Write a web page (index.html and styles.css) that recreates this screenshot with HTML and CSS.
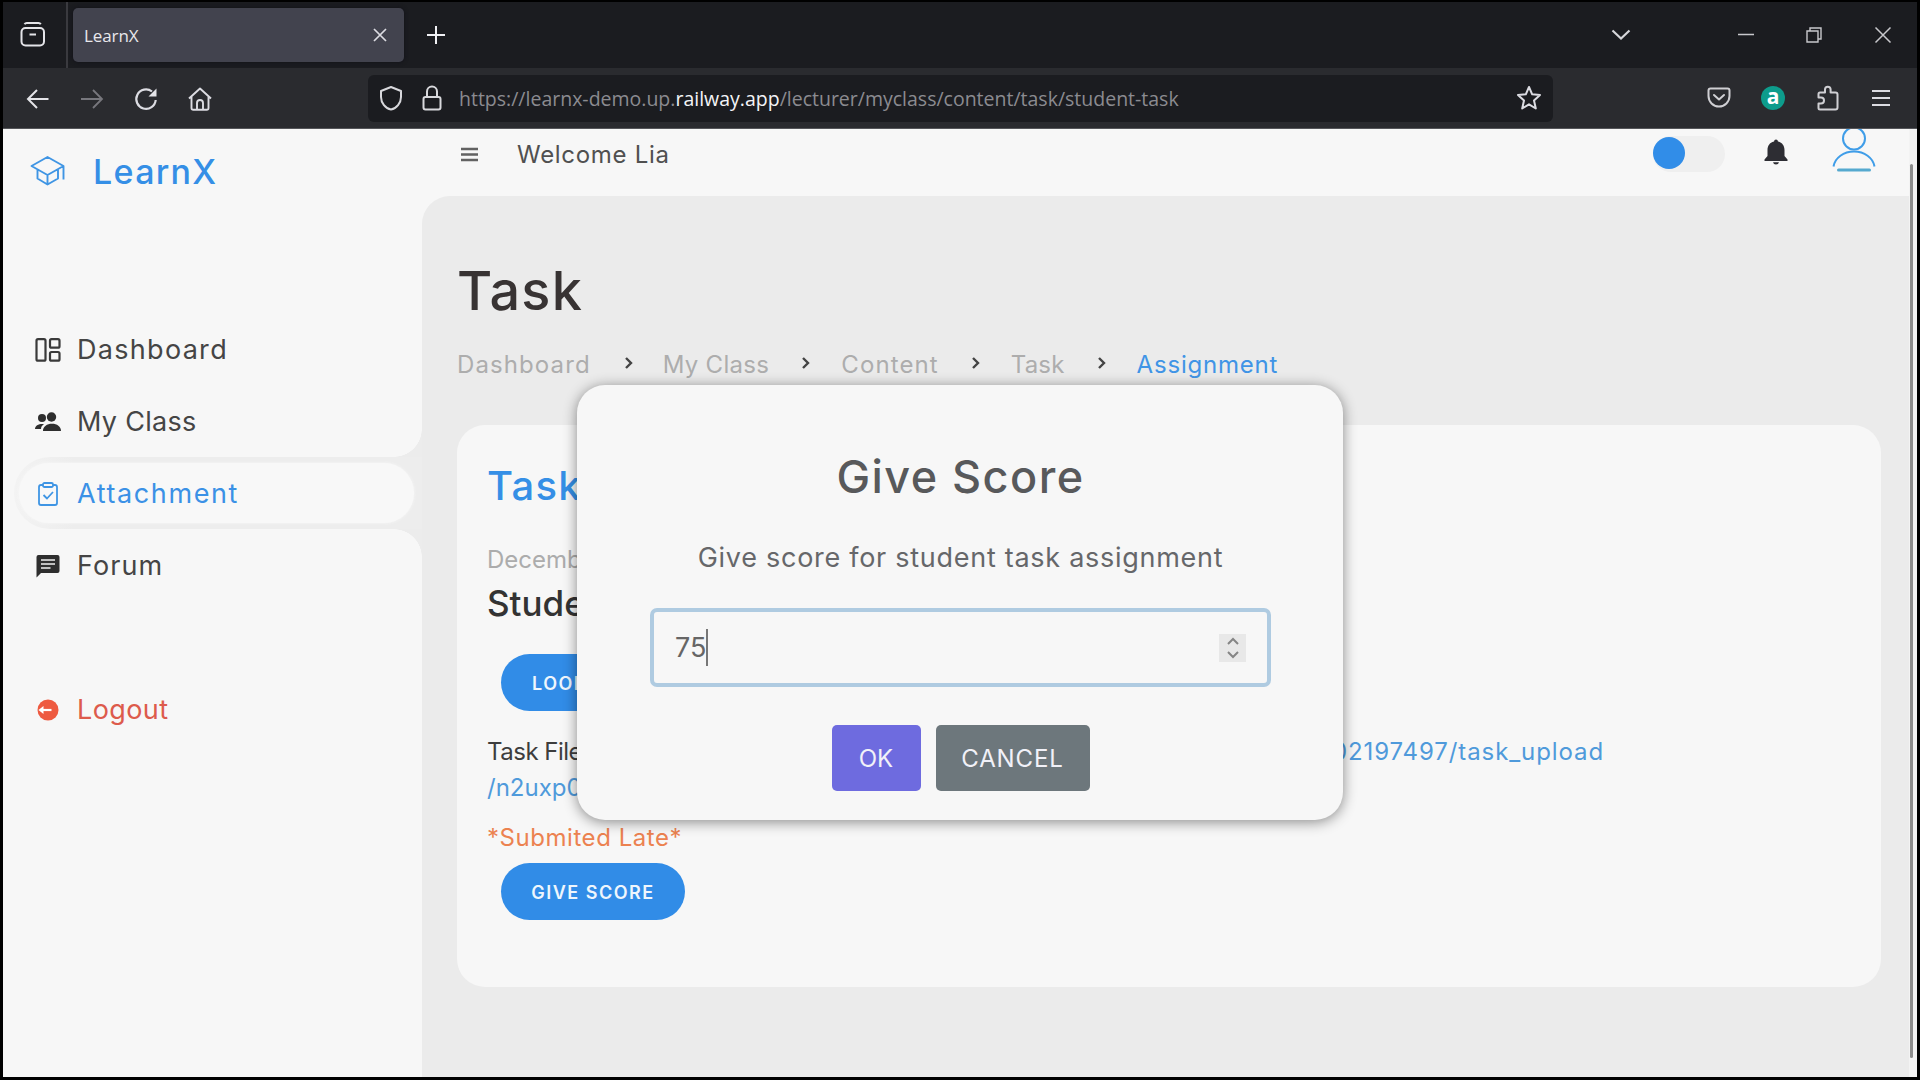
FILE: index.html
```
<!DOCTYPE html>
<html lang="en">
<head>
<meta charset="utf-8">
<title>LearnX</title>
<link rel="stylesheet" href="styles.css">
</head>
<body>
<div class="window">
  <div class="tabbar">
    <div class="view-btn">
      <svg width="26" height="26" viewBox="0 0 26 26" fill="none" stroke="#e4e4e8" stroke-width="2"><path d="M4.5 2.2C5 1.4 5.8 1 6.800 1H18.500C19.500 1 20.300 1.400 20.800 2.200"/><rect x="1.500" y="6" width="22.500" height="17.500" rx="4"/><path d="M9.500 12.500H16"/></svg>
    </div>
    <div class="tab">
      <span>LearnX</span>
      <svg width="14" height="14" viewBox="0 0 14 14" stroke="#dcdce2" stroke-width="1.700"><path d="M1 1L13 13M13 1L1 13"/></svg>
    </div>
    <svg class="newtab" width="18" height="18" viewBox="0 0 18 18" stroke="#f0f0f4" stroke-width="2"><path d="M9 0V18M0 9H18"/></svg>
    <div class="win-controls">
      <svg width="20" height="12" viewBox="0 0 20 12" fill="none" stroke="#d6d6da" stroke-width="2.200"><path d="M1.500 1.500L10 9.500L18.500 1.500"/></svg>
      <svg width="16" height="16" viewBox="0 0 16 16" stroke="#c8c8cc" stroke-width="1.500"><path d="M0 7.500H16"/></svg>
      <svg width="16" height="16" viewBox="0 0 16 16" fill="none" stroke="#c8c8cc" stroke-width="1.400"><path d="M1 4H12V15H1ZM4 3.500V1H15V12H12.500"/></svg>
      <svg width="18" height="18" viewBox="0 0 18 18" stroke="#c8c8cc" stroke-width="1.500"><path d="M1.500 1.500L16.500 16.500M16.500 1.500L1.500 16.500"/></svg>
    </div>
  </div>

  <div class="toolbar">
    <div class="nav">
      <svg width="24" height="24" viewBox="0 0 24 24" fill="none" stroke="#e4e4e8" stroke-width="2"><path d="M22.500 12H2M11 3L2 12L11 21"/></svg>
      <svg width="24" height="24" viewBox="0 0 24 24" fill="none" stroke="#77777d" stroke-width="1.800"><path d="M1 12H22M13 3L22 12L13 21"/></svg>
      <svg width="24" height="24" viewBox="0 0 24 24" fill="none" stroke="#dcdce2" stroke-width="2.200"><path d="M18 4.500A9.700 9.700 0 1 0 21.700 13"/><path d="M22.500 1.500V9.500H14.500Z" fill="#e4e4e8" stroke="none"/></svg>
      <svg width="24" height="24" viewBox="0 0 24 24" fill="none" stroke="#dcdce2" stroke-width="1.900" stroke-linejoin="round"><path d="M1 11.500L12 1.500L23 11.500M3.500 9.500V21Q3.500 22.800 5.300 22.800H18.700Q20.500 22.800 20.500 21V9.500"/><path d="M9 22.500V16Q9 13 12 13T15 16V22.500"/></svg>
    </div>
    <div class="urlbar">
      <svg width="24" height="26" viewBox="0 0 24 26" fill="none" stroke="#d8d8dc" stroke-width="2" stroke-linejoin="round"><path d="M12 2L22 6V12C22 18 17.500 23.500 12 24.500C6.500 23.500 2 18 2 12V6Z"/></svg>
      <svg width="20" height="26" viewBox="0 0 20 26" fill="none" stroke="#d8d8dc" stroke-width="2"><rect x="1.500" y="12" width="17" height="12.500" rx="2"/><path d="M5 12V6.500A5 5 0 0 1 15 6.500V12"/></svg>
      <div class="url">https://learnx-demo.up.<b>railway.app</b>/lecturer/myclass/content/task/student-task</div>
      <svg width="26" height="26" viewBox="0 0 26 26" fill="none" stroke="#dcdce2" stroke-width="2" stroke-linejoin="round"><path d="M13 2L16.200 9.300L24 10L18 15.500L19.800 23.500L13 19.300L6.200 23.500L8 15.500L2 10L9.800 9.300Z"/></svg>
    </div>
    <div class="ext">
      <svg width="24" height="22" viewBox="0 0 24 22" fill="none" stroke="#cfcfd3" stroke-width="2" stroke-linecap="round" stroke-linejoin="round"><path d="M3.500 1.500H20.500Q22.500 1.500 22.500 3.500V9A10.500 10.500 0 0 1 1.500 9V3.500Q1.500 1.500 3.500 1.500Z"/><path d="M7 8L12 12.500L17 8"/></svg>
      <span class="ext-a">a</span>
      <svg width="24" height="26" viewBox="0 0 24 26" fill="none" stroke="#cfcfd3" stroke-width="2" stroke-linejoin="round"><path d="M4 24.500Q2.500 24.500 2.500 23V18.500H5A3 3 0 0 0 5 12.500H2.500V9Q2.500 7.500 4 7.500H9V4.500A2.800 2.800 0 0 1 14.600 4.500V7.500H19.500Q21.500 7.500 21.500 9.500V22.500Q21.500 24.500 19.500 24.500Z"/></svg>
      <svg width="18" height="16" viewBox="0 0 18 16" stroke="#dcdce2" stroke-width="1.900"><path d="M0 1H18M0 8H18M0 15H18"/></svg>
    </div>
  </div>

  <div class="page">
    <aside class="sidebar">
      <div class="brand">
        <svg width="36" height="32" viewBox="0 0 36 32" fill="none" stroke="#3f95e4" stroke-width="1.900" stroke-linejoin="round"><path d="M1.500 11L17.500 2L33.500 11L17.500 20ZM7.500 14.500V23.500L17.500 29.500L28 23.500V14.500M17.500 20V29.500M33.500 11V24.500"/></svg>
        <span>LearnX</span>
      </div>
      <ul class="menu">
        <li><svg width="26" height="24" viewBox="0 0 26 24" fill="none" stroke="#3a3a3a" stroke-width="2.200"><rect x="1.500" y="1.200" width="9" height="21.500" rx="1.500"/><rect x="15" y="1.200" width="9.500" height="8.500" rx="1.500"/><rect x="15" y="14" width="9.500" height="8.700" rx="1.500"/></svg><span class="w-dashboard">Dashboard</span></li>
        <li><svg width="26" height="20" viewBox="0 0 26 20" fill="#2e2e2e"><circle cx="7" cy="6" r="4"/><circle cx="16.500" cy="5" r="4.700"/><path d="M0 17C0 13.500 4 11.500 9 12C7 13.500 6 15 6 17ZM8 19C8 14.500 12 11.800 17 11.800S26 14.500 26 19Z"/></svg><span class="w-class">My Class</span></li>
        <li class="active"><svg width="22" height="24" viewBox="0 0 22 24" fill="none" stroke="#3f95e4" stroke-width="1.800" stroke-linejoin="round"><path d="M6 3H4Q2 3 2 5V21Q2 23 4 23H18Q20 23 20 21V5Q20 3 18 3H16"/><rect x="6" y="1" width="10" height="4" rx="1.500"/><path d="M6.500 13L10 16.500L16 10"/></svg><span class="w-attach">Attachment</span></li>
        <li><svg width="24" height="24" viewBox="0 0 24 24"><path d="M2.500 1H21.500Q23.500 1 23.500 3V17Q23.500 19 21.500 19H5L0.500 23.500V3Q0.500 1 2.500 1Z" fill="#2e2e2e"/><path d="M5 6H19M5 10H19M5 14H14.500" stroke="#f0f0f0" stroke-width="1.700"/></svg><span class="w-forum">Forum</span></li>
      </ul>
      <div class="logout"><svg width="22" height="22" viewBox="0 0 22 22"><circle cx="11" cy="11" r="10.500" fill="#ee5a40"/><path d="M3 11H14.500" stroke="#fff" stroke-width="2.200"/><path d="M1.500 11L6.500 7V15Z" fill="#fff"/></svg><span>Logout</span></div>
    </aside>

    <div class="content">
      <header class="topbar">
        <svg class="burger" width="17" height="15" viewBox="0 0 17 15" stroke="#626262" stroke-width="2.700"><path d="M0 2H17M0 7.500H17M0 13H17"/></svg>
        <span class="welcome">Welcome Lia</span>
        <div class="toggle"><i></i></div>
        <svg class="bell" width="24" height="26" viewBox="0 0 24 26" fill="#2d2d33"><path d="M12 0.500Q13.800 0.500 14 2.500C18.500 3.500 20.500 7 20.500 11V17L23.500 20.500V22H0.500V20.500L3.500 17V11C3.500 7 5.500 3.500 10 2.500Q10.200 0.500 12 0.500ZM9 23.200H15Q14.500 25.500 12 25.500T9 23.200Z"/></svg>
        <svg class="avatar" width="44" height="44" viewBox="0 0 44 44" fill="none" stroke="#3f9de8" stroke-width="2"><circle cx="22" cy="9.500" r="11"/><path d="M1.500 37.500A20.700 17.500 0 0 1 42.500 37.500"/><path d="M6.500 41H37.500" stroke="#55a9cf" stroke-width="3" stroke-linecap="round"/></svg>
      </header>

      <main class="main">
        <h1>Task</h1>
        <nav class="crumbs">
          <span class="c1">Dashboard</span><svg class="sep" viewBox="0 0 72 14"><path d="M35 2L40 7L35 12"/></svg>
          <span class="c2">My Class</span><svg class="sep" viewBox="0 0 72 14"><path d="M34 2L39 7L34 12"/></svg>
          <span class="c3">Content</span><svg class="sep" viewBox="0 0 72 14"><path d="M34 2L39 7L34 12"/></svg>
          <span class="c4">Task</span><svg class="sep" viewBox="0 0 72 14"><path d="M34 2L39 7L34 12"/></svg>
          <span class="c5">Assignment</span>
        </nav>
        <section class="card">
          <h2>Task</h2>
          <p class="date">December</p>
          <h3>Student</h3>
          <button class="pill look">LOOK</button>
          <div class="file"><span class="file-label">Task File</span><a class="file-path">02197497/task_upload</a></div>
          <a class="file-rest">/n2uxp0</a>
          <p class="late">*Submited Late*</p>
          <button class="pill">GIVE SCORE</button>
        </section>
      </main>
    </div>
    <div class="scrollbar"><i></i></div>
  </div>

  <div class="modal">
    <h2>Give Score</h2>
    <p>Give score for student task assignment</p>
    <div class="field">
      <span class="value">75</span><i class="caret"></i>
      <span class="spinner"><svg width="14" height="24" viewBox="0 0 14 24" fill="none" stroke="#858585" stroke-width="2"><path d="M2 8L7 3L12 8M2 16L7 21L12 16"/></svg></span>
    </div>
    <div class="actions"><button class="ok">OK</button><button class="cancel">CANCEL</button></div>
  </div>
</div>
</body>
</html>
```
FILE: styles.css
```
* { box-sizing: border-box; margin: 0; padding: 0; }
body { background: #000; font-family: Inter, "Open Sans", sans-serif; font-size: 24px; color: #333; overflow: hidden; }
svg { display: block; flex: none; }
button { border: 0; font-family: inherit; }
span, a { white-space: nowrap; }

.window { width: 1920px; height: 1080px; padding: 2px 3px 3px; display: flex; flex-direction: column; position: relative; }

/* Browser chrome */
.tabbar { height: 66px; flex: none; background: #1b1c20; display: flex; align-items: center; }
.view-btn { width: 65px; height: 100%; border-right: 2px solid #3a3a3f; display: flex; align-items: center; padding-left: 17px; }
.tab { width: 331px; height: 54px; margin-left: 5px; border-radius: 5px; background: #42434e; display: flex; align-items: center; justify-content: space-between; padding: 0 17px 0 11px; box-shadow: 0 0 4px #111118; color: #e8e8ec; font: 17px "Open Sans", sans-serif; letter-spacing: -.1px; }
.newtab { margin-left: 23px; }
.win-controls { margin-left: auto; display: flex; align-items: center; padding-right: 25px; }
.win-controls svg:nth-child(2) { margin-left: 107px; }
.win-controls svg:nth-child(3) { margin-left: 52px; }
.win-controls svg:nth-child(4) { margin-left: 52px; }

.toolbar { height: 61px; flex: none; background: #2a2b2f; border-bottom: 1px solid #55565a; display: flex; align-items: center; }
.nav { width: 365px; display: flex; gap: 30px; padding: 2px 0 0 23px; }
.urlbar { width: 1185px; height: 47px; border-radius: 6px; background: #1b1c20; display: flex; align-items: center; padding: 0 11px; }
.urlbar svg:nth-child(2) { margin-left: 19px; }
.url { flex: 1; margin: 1px 0 0 17px; font: 19.500px "Open Sans", sans-serif; color: #8b8b90; }
.url b { font-weight: 400; color: #f4f4f7; }
.ext { flex: 1; display: flex; align-items: center; padding-left: 154px; }
.ext-a { width: 24px; height: 24px; border-radius: 50%; background: #0d9c8c; color: #fff; font: bold 21px/20px "Open Sans", sans-serif; text-align: center; margin: 0 31px 0 30px; }
.ext svg:last-child { margin-left: 32px; }

/* Page */
.page { flex: 1; display: flex; background: #f7f7f7; min-height: 0; }
.sidebar { width: 419px; flex: none; }
.brand { height: 84px; padding-left: 27px; display: flex; align-items: center; color: #358fe6; font-size: 34px; font-weight: 500; letter-spacing: 1.300px; }
.brand span { margin-left: 27px; }
.menu { list-style: none; margin-top: 100px; }
.menu li, .logout { height: 72px; padding-top: 1px; display: flex; align-items: center; font-size: 27px; color: #454545; padding-left: 32px; }
.menu li svg, .logout svg { width: 26px; }
.menu li span, .logout span { margin-left: 16px; }
.w-dashboard { letter-spacing: 1.300px; }
.w-class { letter-spacing: .3px; }
.w-attach { letter-spacing: 1.600px; }
.w-forum { letter-spacing: 1.100px; }
.menu .active { position: relative; margin-left: 11px; padding-left: 21px; border-radius: 36px 0 0 36px; background: linear-gradient(90deg, #f3f3f3, #ededed 60px); color: #3b91e6; z-index: 0; }
.menu .active::after { content: ""; position: absolute; z-index: -1; inset: 6px 8px 6px 5px; border-radius: 30px; background: #f8f8f8; box-shadow: 0 0 3px #f8f8f8; }
.menu .active::before { content: ""; position: absolute; right: 0; top: -28px; width: 28px; height: 128px; background: radial-gradient(circle at 0 0, transparent 27.500px, #ececec 28px) top / 28px 28px no-repeat, radial-gradient(circle at 0 100%, transparent 27.500px, #ececec 28px) bottom / 28px 28px no-repeat; }
.logout { margin-top: 72px; color: #dd5b4c; letter-spacing: .4px; }

.content { flex: 1; display: flex; flex-direction: column; min-width: 0; }
.topbar { height: 67px; flex: none; display: flex; align-items: flex-start; padding-left: 39px; }
.burger { margin-top: 18px; }
.welcome { margin: 11px 0 0 39px; line-height: 30px; letter-spacing: .7px; color: #505050; }
.toggle { width: 72px; height: 36px; margin: 7px 0 0 auto; border-radius: 18px; background: #efefef; }
.toggle i { display: block; width: 32px; height: 32px; margin-top: 1px; border-radius: 50%; background: #318de8; }
.bell { margin: 10px 0 0 39px; }
.avatar { margin: 0 33px 0 44px; }
.main { flex: 1; background: #ebebeb; border-top-left-radius: 28px; padding: 60px 28px 0 35px; }
h1 { font-size: 54px; line-height: 70px; font-weight: 500; letter-spacing: 1.200px; color: #383333; }
.crumbs { display: flex; align-items: center; height: 30px; margin-top: 23px; color: #adadad; }
.sep { width: 72px; height: 14px; margin-top: -2px; fill: none; stroke: #444; stroke-width: 2.400; }
.c1 { letter-spacing: 1.100px; }
.c2 { letter-spacing: .3px; }
.c3 { letter-spacing: 1.100px; }
.c4 { letter-spacing: .2px; }
.c5 { letter-spacing: .8px; color: #4094e6; }

.card { height: 562px; margin-top: 46px; border-radius: 28px; background: #f7f7f7; padding: 31px 30px 0; }
.card h2 { font-size: 40px; line-height: 60px; font-weight: 500; letter-spacing: 1.300px; color: #358fe6; }
.date { margin-top: 26px; line-height: 36px; color: #acacac; }
.card h3 { margin-top: 3px; font-size: 35px; line-height: 44px; font-weight: 500; color: #333; }
.pill { display: block; width: 184px; height: 57px; margin: 7px 0 0 14px; padding-top: 1px; border-radius: 29px; background: #318ce7; color: #eef6fd; font-size: 18px; font-weight: 600; letter-spacing: 1.500px; }
.pill.look { margin-top: 29px; text-align: left; padding-left: 31px; }
.file { width: 1117px; margin-top: 23px; display: flex; justify-content: space-between; line-height: 36px; }
.file-label { letter-spacing: -.5px; color: #3d3d3d; }
.file-path { color: #4f9adb; letter-spacing: .9px; }
.file-rest { display: block; line-height: 36px; color: #4f9adb; }
.late { margin-top: 14px; line-height: 36px; letter-spacing: .55px; color: #ec8250; }

.scrollbar { width: 8px; background: #f3f3f3; padding-top: 35px; }
.scrollbar i { display: block; width: 3px; height: 894px; margin-left: 1px; background: #8c8c8c; border-radius: 2px; }

/* Dialog */
.modal { position: absolute; left: 577px; top: 385px; width: 766px; height: 435px; border-radius: 28px; background: #f7f7f7; box-shadow: 0 2px 14px rgba(0, 0, 0, .45); padding: 62px 72px 0 73px; text-align: center; color: #58595b; }
.modal h2 { font-size: 45px; line-height: 60px; font-weight: 500; letter-spacing: 1.450px; }
.modal p { margin-top: 33px; font-size: 27px; line-height: 36px; letter-spacing: .72px; white-space: nowrap; color: #66676a; }
.field { height: 79px; margin-top: 32px; border: 4px solid #afcbe1; border-radius: 7px; display: flex; align-items: center; padding: 0 21px; font-size: 27px; color: #666; }
.caret { width: 1.500px; height: 37px; background: #777; }
.spinner { width: 27px; height: 28px; margin-left: auto; background: #e8e8e8; display: flex; align-items: center; justify-content: center; }
.actions { display: flex; justify-content: center; gap: 15px; margin-top: 38px; }
.actions button { height: 66px; border-radius: 5px; color: #f1f1f8; font-size: 24px; }
.ok { width: 89px; background: #6e6bdf; }
.cancel { width: 154px; background: #6d777c; letter-spacing: .9px; }
```
